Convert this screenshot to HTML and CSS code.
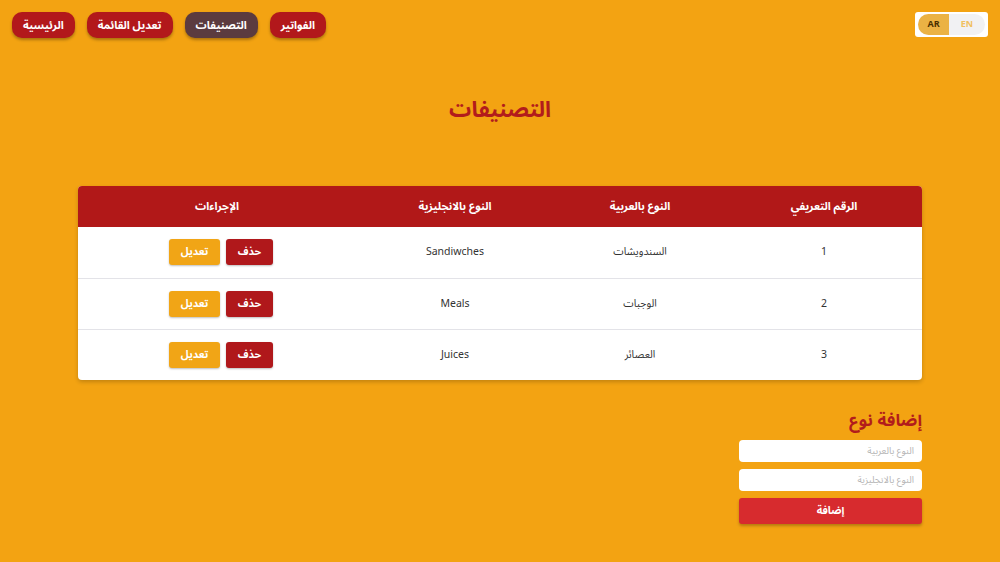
FILE: index.html
```html
<!DOCTYPE html>
<html lang="ar" dir="rtl">
<head>
<meta charset="utf-8">
<title>التصنيفات</title>
<link rel="stylesheet" href="styles.css">
</head>
<body>
<header class="topbar">
  <div class="lang">
    <div class="lang-pill">
      <span class="lang-opt active">AR</span>
      <span class="lang-opt">EN</span>
    </div>
  </div>
  <nav class="nav">
    <a class="nav-btn">الفواتير</a>
    <a class="nav-btn current">التصنيفات</a>
    <a class="nav-btn">تعديل القائمة</a>
    <a class="nav-btn">الرئيسية</a>
  </nav>
</header>

<main class="main">
  <h1 class="title">التصنيفات</h1>

  <div class="table-card">
    <table class="table">
      <colgroup>
        <col class="c1"><col class="c2"><col class="c3"><col class="c4">
      </colgroup>
      <thead>
        <tr>
          <th>الرقم التعريفي</th>
          <th>النوع بالعربية</th>
          <th>النوع بالانجليزية</th>
          <th>الإجراءات</th>
        </tr>
      </thead>
      <tbody>
        <tr>
          <td>1</td><td>السندويشات</td><td>Sandiwches</td>
          <td><div class="actions"><button class="btn del">حذف</button><button class="btn edit">تعديل</button></div></td>
        </tr>
        <tr>
          <td>2</td><td>الوجبات</td><td>Meals</td>
          <td><div class="actions"><button class="btn del">حذف</button><button class="btn edit">تعديل</button></div></td>
        </tr>
        <tr>
          <td>3</td><td>العصائر</td><td>Juices</td>
          <td><div class="actions"><button class="btn del">حذف</button><button class="btn edit">تعديل</button></div></td>
        </tr>
      </tbody>
    </table>
  </div>

  <section class="add">
    <h2 class="add-title">إضافة نوع</h2>
    <input class="field" type="text" placeholder="النوع بالعربية">
    <input class="field" type="text" placeholder="النوع بالانجليزية">
    <button class="add-btn">إضافة</button>
  </section>
</main>
</body>
</html>
```

FILE: styles.css
```css
* { box-sizing: border-box; }
html, body {
  margin: 0;
  padding: 0;
}
body {
  background: #f3a312;
  font-family: "Noto Sans Arabic", "Noto Sans", "DejaVu Sans", sans-serif;
  color: #333;
  width: 1000px;
  height: 562px;
  overflow: hidden;
}
.topbar {
  display: flex;
  justify-content: space-between;
  align-items: flex-start;
  padding: 12px 12px 0 12px;
  height: 40px;
}
.lang {
  background: #fff;
  border-radius: 3px;
  padding: 2px 3px;
  width: 73px;
  height: 25px;
}
.lang-pill {
  display: flex;
  direction: ltr;
  height: 21px;
  border-radius: 11px;
  overflow: hidden;
  background: #f1f1f3;
}
.lang-opt {
  flex: 1;
  display: flex;
  align-items: center;
  justify-content: center;
  font-size: 9px;
  font-weight: 700;
  color: #f0c060;
}
.lang-opt.active {
  flex: 0 0 31px;
  background: #ebb244;
  color: #4a3000;
}
.nav {
  display: flex;
  gap: 12px;
}
.nav-btn {
  display: flex;
  align-items: center;
  justify-content: center;
  height: 26px;
  padding: 0 11px;
  background: #b2181b;
  color: #fff;
  font-size: 11px;
  font-weight: 700;
  border-radius: 10px;
  box-shadow: 0 2px 3px rgba(0,0,0,0.3);
}
.nav-btn.current { background: #5b3b3f; }

.main {
  padding: 0 78px;
}
.title {
  margin: 50px 0 0;
  text-align: center;
  color: #b21c1c;
  font-size: 22px;
  font-weight: 700;
  line-height: 40px;
}
.table-card {
  margin-top: 56px;
  background: #fff;
  border-radius: 4px;
  overflow: hidden;
  box-shadow: 0 2px 4px rgba(0,0,0,0.2);
}
.table {
  width: 100%;
  border-collapse: collapse;
  table-layout: fixed;
}
.c1 { width: 196px; }
.c2 { width: 172px; }
.c3 { width: 198px; }
.c4 { width: 278px; }
.table th {
  background: #b11818;
  color: #fff;
  font-size: 11px;
  font-weight: 700;
  height: 41px;
  padding: 0;
}
.table td {
  height: 51px;
  padding: 0;
  text-align: center;
  font-size: 10.5px;
  color: #333;
  border-top: 1px solid #e3e3e8;
}
.table tbody tr:first-child td { border-top: none; }
.actions {
  display: flex;
  justify-content: center;
  gap: 6px;
  padding-left: 8px;
}
.btn {
  width: 47px;
  height: 26px;
  border: none;
  border-radius: 3px;
  font-family: inherit;
  font-size: 10.5px;
  font-weight: 700;
  color: #fff;
  box-shadow: 0 1px 2px rgba(0,0,0,0.25);
}
.btn.del { background: #b0181b; }
.btn.edit { background: #f1a516; width: 51px; }

.add {
  margin-top: 28px;
  width: 183px;
  display: flex;
  flex-direction: column;
}
.add-title {
  margin: 0 0 6px;
  color: #b21c1c;
  font-size: 17px;
  font-weight: 700;
  line-height: 26px;
}
.field {
  height: 22px;
  border: none;
  border-radius: 4px;
  background: #fff;
  margin-bottom: 7px;
  padding: 0 8px;
  font-family: inherit;
  font-size: 9.5px;
  text-align: right;
}
.field::placeholder { color: #b5b5b5; }
.add-btn {
  height: 26px;
  border: none;
  border-radius: 3px;
  background: #d72b2e;
  color: #fff;
  font-family: inherit;
  font-size: 10.5px;
  font-weight: 700;
  box-shadow: 0 2px 3px rgba(0,0,0,0.25);
}
```
